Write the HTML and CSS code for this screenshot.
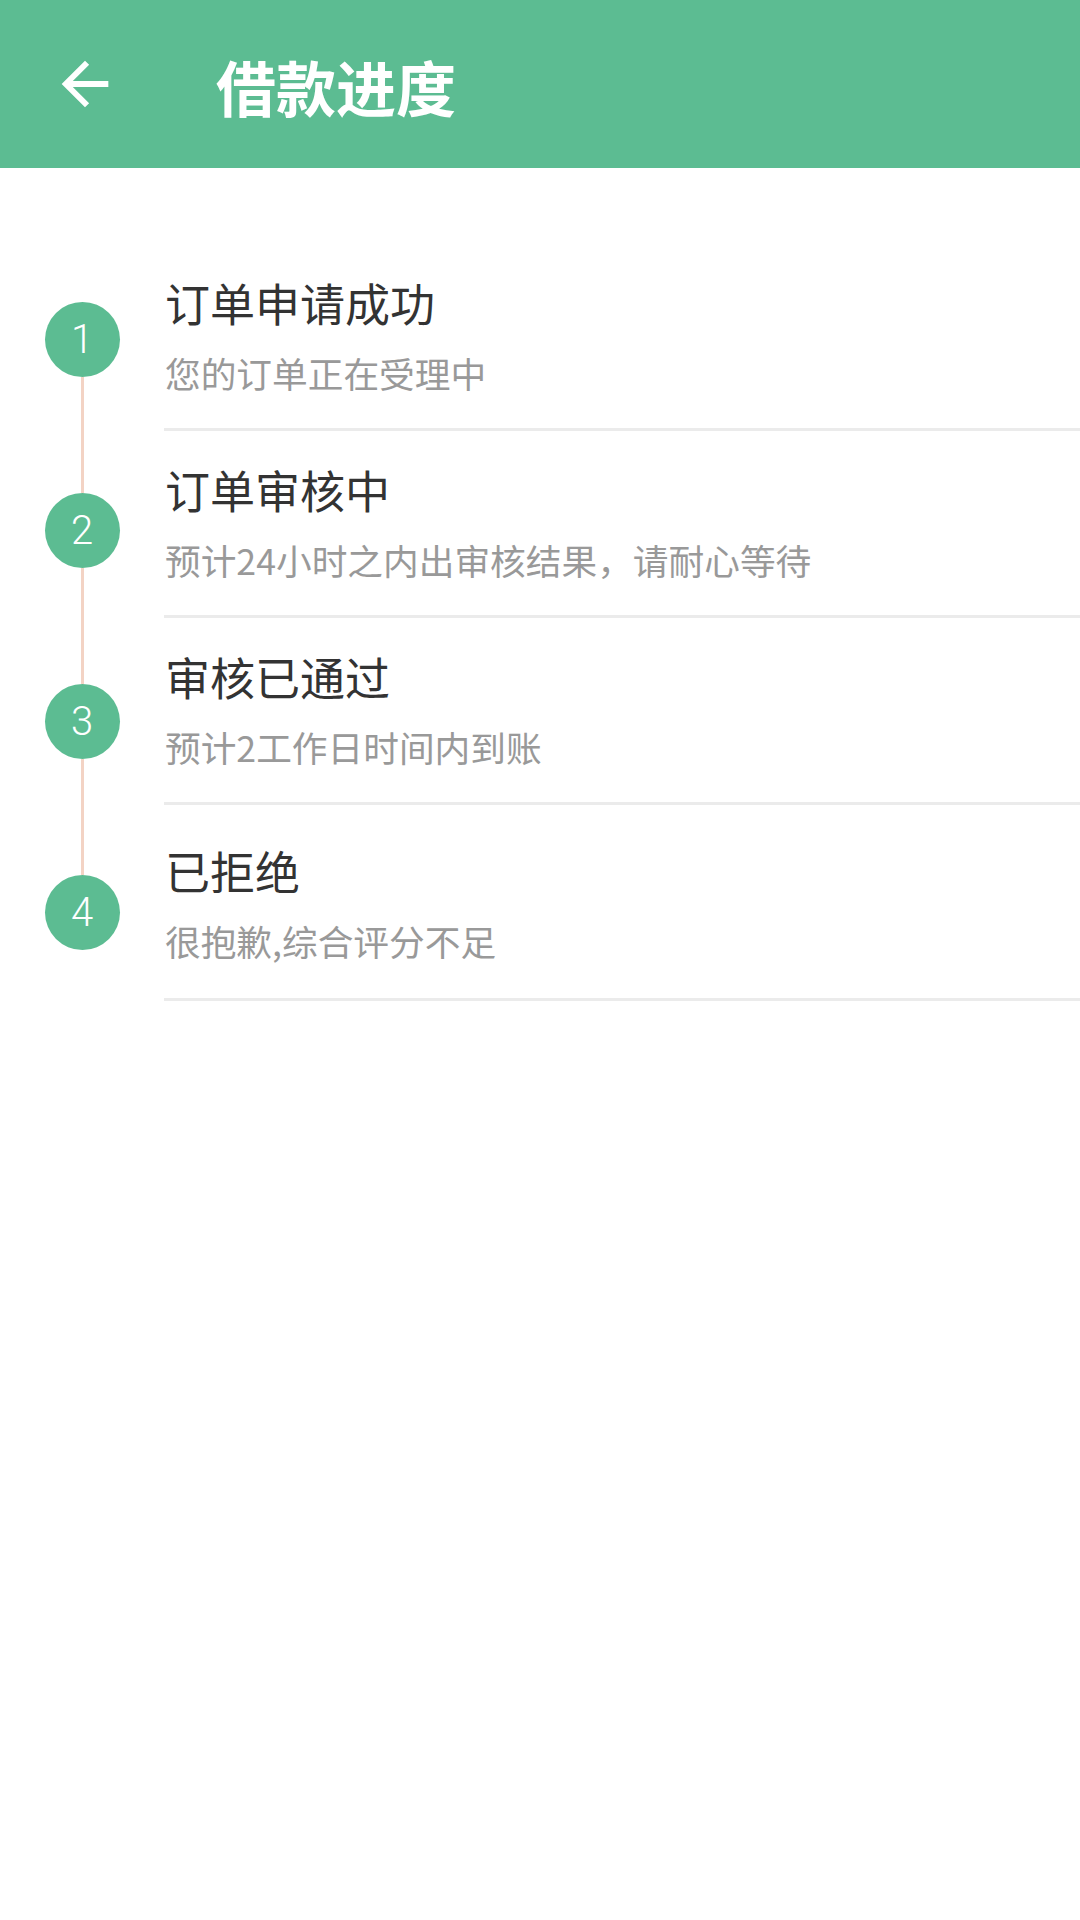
FILE: index.html
```html
<!DOCTYPE html>
<html lang="zh-CN">
<head>
    <meta charset="UTF-8">
    <meta name="viewport" content="width=device-width, initial-scale=1.0">
    <title>借款进度</title>
    <link rel="stylesheet" href="styles.css">
</head>
<body>

    <div class="toolbar">
        <a class="back" href="javascript:history.back()">
            <svg viewBox="0 0 24 24" width="70" height="70">
                <path fill="#fff" d="M20 11H7.83l5.59-5.59L12 4l-8 8 8 8 1.41-1.41L7.83 13H20v-2z"/>
            </svg>
        </a>
        <h1 class="toolbar-title">借款进度</h1>
    </div>

    <div class="progress">
        <!-- steps on the left, drawn evenly spaced -->
        <div class="timeline">
            <span class="dot">1</span>
            <span class="link"></span>
            <span class="dot">2</span>
            <span class="link"></span>
            <span class="dot">3</span>
            <span class="link"></span>
            <span class="dot">4</span>
        </div>

        <ul class="steps">
            <li class="step">
                <p class="step-title">订单申请成功</p>
                <p class="step-desc">您的订单正在受理中</p>
            </li>
            <li class="step">
                <p class="step-title">订单审核中</p>
                <p class="step-desc">预计24小时之内出审核结果，请耐心等待</p>
            </li>
            <li class="step">
                <p class="step-title">审核已通过</p>
                <p class="step-desc">预计2工作日时间内到账</p>
            </li>
            <li class="step step-last">
                <p class="step-title">已拒绝</p>
                <p class="step-desc">很抱歉,综合评分不足</p>
            </li>
        </ul>
    </div>

</body>
</html>
```

FILE: styles.css
```css
body {
    font-family: "Noto Sans CJK SC", "Noto Sans", sans-serif;
    background-color: #fff;
    margin: 0;
    padding: 0;
}

.toolbar {
    display: flex;
    align-items: center;
    height: 168px;
    background-color: #5cbc92;
}

.back {
    display: block;
    width: 70px;
    height: 70px;
    margin-left: 50px;
}

.back svg {
    display: block;
}

.toolbar-title {
    margin: 4px 0 0 96px;
    color: #fff;
    font-size: 60px;
    font-weight: bold;
    line-height: 70px;
}

.progress {
    display: flex;
}

.timeline {
    display: flex;
    flex-direction: column;
    align-items: center;
    width: 164px;
    flex-shrink: 0;
    padding-top: 134px;
}

.dot {
    display: flex;
    align-items: center;
    justify-content: center;
    width: 75px;
    height: 75px;
    border-radius: 50%;
    background-color: #5cbc92;
    color: #fff;
    font-family: Roboto, "Noto Sans", sans-serif;
    font-size: 40px;
    font-weight: 300;
}

.link {
    display: block;
    width: 3px;
    height: 116px;
    background-color: #f3d3c4;
}

.steps {
    flex: 1;
    list-style: none;
    margin: 76px 0 0 0;
    padding: 0 0 0 1px;
}

.step {
    padding: 33px 0 33px 0;
    margin-left: -1px;
    border-bottom: 3px solid #ebebeb;
}

.step-last {
    padding-top: 40px;
    padding-bottom: 35px;
}

.step p {
    margin: 0;
    padding-left: 1px;
}

.step-title {
    color: #333;
    font-size: 45px;
    line-height: 52px;
}

.step-desc {
    margin-top: 22px !important;
    color: #999;
    font-size: 35.7px;
    line-height: 44px;
}
```
